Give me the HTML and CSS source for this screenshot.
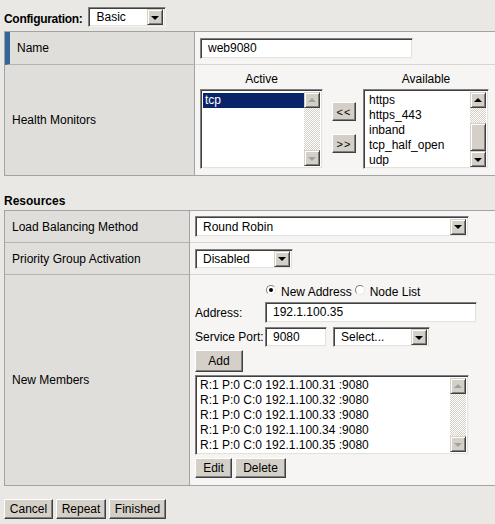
FILE: index.html
```html
<!DOCTYPE html>
<html>
<head>
<meta charset="utf-8">
<link rel="stylesheet" href="styles.css">
</head>
<body>
<div class="page">
  <div class="config">
    <span class="config-label">Configuration:</span>
    <div class="select sel-basic"><span class="sel-text">Basic</span><span class="sel-btn"><i class="tri-down"></i></span></div>
  </div>

  <div class="grid grid-a">
    <div class="lbl lbl-mark row-name">Name</div>
    <div class="val row-name"><div class="field in-name">web9080</div></div>
    <div class="lbl lbl-last row-hm">Health Monitors</div>
    <div class="val val-last row-hm hm">
      <div class="hm-col col-active">
        <div class="hm-head">Active</div>
        <div class="listbox lb-active">
          <div class="lb-items">
            <div class="lb-item selected">tcp</div>
          </div>
          <div class="sbar">
            <span class="sb-btn"><i class="tri-up dis"></i></span>
            <span class="sb-track"></span>
            <span class="sb-btn"><i class="tri-down dis"></i></span>
          </div>
        </div>
      </div>
      <div class="hm-btns">
        <button class="btn btn-move">&lt;&lt;</button>
        <button class="btn btn-move">&gt;&gt;</button>
      </div>
      <div class="hm-col col-avail">
        <div class="hm-head">Available</div>
        <div class="listbox lb-avail">
          <div class="lb-items scrolled">
            <div class="lb-item">http</div>
            <div class="lb-item">https</div>
            <div class="lb-item">https_443</div>
            <div class="lb-item">inband</div>
            <div class="lb-item">tcp_half_open</div>
            <div class="lb-item">udp</div>
          </div>
          <div class="sbar">
            <span class="sb-btn"><i class="tri-up"></i></span>
            <span class="sb-track sb-top"></span>
            <span class="sb-thumb"></span>
            <span class="sb-track"></span>
            <span class="sb-btn"><i class="tri-down"></i></span>
          </div>
        </div>
      </div>
    </div>
  </div>

  <div class="section">Resources</div>

  <div class="grid grid-b">
    <div class="lbl row-std">Load Balancing Method</div>
    <div class="val row-std"><div class="select sel-lb"><span class="sel-text">Round Robin</span><span class="sel-btn"><i class="tri-down"></i></span></div></div>
    <div class="lbl row-std">Priority Group Activation</div>
    <div class="val row-std"><div class="select sel-prio"><span class="sel-text">Disabled</span><span class="sel-btn"><i class="tri-down"></i></span></div></div>
    <div class="lbl lbl-last row-mem">New Members</div>
    <div class="val val-last row-mem members">
      <div class="radios">
        <span class="radio checked"></span><span class="radio-text">New Address</span>
        <span class="radio"></span><span class="radio-text">Node List</span>
      </div>
      <div class="frow frow-addr">
        <span class="flabel">Address:</span>
        <div class="field in-addr">192.1.100.35</div>
      </div>
      <div class="frow frow-port">
        <span class="flabel">Service Port:</span>
        <div class="field in-port">9080</div>
        <div class="select sel-port"><span class="sel-text">Select...</span><span class="sel-btn"><i class="tri-down"></i></span></div>
      </div>
      <button class="btn btn-add">Add</button>
      <div class="listbox lb-members">
        <div class="lb-items">
          <div class="lb-item">R:1 P:0 C:0 192.1.100.31 :9080</div>
          <div class="lb-item">R:1 P:0 C:0 192.1.100.32 :9080</div>
          <div class="lb-item">R:1 P:0 C:0 192.1.100.33 :9080</div>
          <div class="lb-item">R:1 P:0 C:0 192.1.100.34 :9080</div>
          <div class="lb-item">R:1 P:0 C:0 192.1.100.35 :9080</div>
        </div>
        <div class="sbar">
          <span class="sb-btn"><i class="tri-up dis"></i></span>
          <span class="sb-track"></span>
          <span class="sb-btn"><i class="tri-down dis"></i></span>
        </div>
      </div>
      <div class="mem-btns">
        <button class="btn btn-edit">Edit</button>
        <button class="btn btn-delete">Delete</button>
      </div>
    </div>
  </div>

  <div class="actions">
    <button class="btn btn-cancel">Cancel</button>
    <button class="btn btn-repeat">Repeat</button>
    <button class="btn btn-finished">Finished</button>
  </div>
</div>
</body>
</html>
```

FILE: styles.css
```css
html, body {
  margin: 0;
  padding: 0;
  overflow: hidden;
  background: #eae8e4;
}
body {
  font-family: "Liberation Sans", Arial, sans-serif;
  font-size: 12px;
  color: #000;
}
.page {
  padding-left: 4px;
  width: 495px;
}

/* ---------- top config row ---------- */
.config {
  display: flex;
  align-items: center;
  height: 20px;
  padding-top: 7px;
  padding-bottom: 4px;
}
.config-label {
  font-weight: bold;
  letter-spacing: -0.3px;
  margin-right: 6px;
  line-height: 14px;
  margin-top: 3px;
}

/* ---------- sunken fields ---------- */
.field, .select, .listbox {
  box-sizing: border-box;
  background: #fff;
  border: 1px solid;
  border-color: #808080 #f4f3f0 #f4f3f0 #808080;
  box-shadow: inset 1px 1px #404040, inset -1px -1px #e4e2dc;
}
.field {
  height: 21px;
  line-height: 19px;
  padding-left: 7px;
  white-space: nowrap;
  overflow: hidden;
}
.select {
  display: flex;
  align-items: center;
  height: 20px;
  padding: 2px 2px 2px 7px;
}
.sel-text {
  flex: 1;
  white-space: nowrap;
  overflow: hidden;
  line-height: 16px;
}
.sel-btn {
  box-sizing: border-box;
  width: 16px;
  height: 16px;
  flex: none;
  background: #d4d0c8;
  border: 1px solid;
  border-color: #d4d0c8 #404040 #404040 #d4d0c8;
  box-shadow: inset 1px 1px #fff, inset -1px -1px #808080;
  display: flex;
  align-items: center;
  justify-content: center;
}
.sel-basic { width: 78px; }
.sel-lb { width: 274px; height: 21px; }
.sel-prio { width: 98px; }
.sel-port { width: 97px; }

.tri-down, .tri-up {
  display: block;
  width: 0;
  height: 0;
  border-left: 4px solid transparent;
  border-right: 4px solid transparent;
}
.tri-down { border-top: 4px solid #000; margin-top: 1px; }
.tri-up { border-bottom: 4px solid #000; margin-bottom: 1px; }
.tri-down.dis { border-top-color: #a0a0a0; }
.tri-up.dis { border-bottom-color: #a0a0a0; }

/* ---------- buttons ---------- */
.btn {
  box-sizing: border-box;
  font-family: "Liberation Sans", Arial, sans-serif;
  font-size: 12px;
  color: #000;
  background: #d4d0c8;
  border: 1px solid;
  border-color: #fff #404040 #404040 #fff;
  box-shadow: inset -1px -1px #808080;
  height: 20px;
  padding: 0;
  margin: 0;
  line-height: 16px;
  text-align: center;
}

/* ---------- grids ---------- */
.grid {
  display: grid;
  border: 1px solid #a3a3a3;
  border-right: none;
  box-sizing: border-box;
  width: 491px;
}
.grid-a { grid-template-columns: 190px 1fr; }
.grid-b { grid-template-columns: 185px 1fr; }
.lbl {
  background: #dfdedb;
  border-right: 1px solid #a3a3a3;
  border-bottom: 1px solid #b4b4b2;
  display: flex;
  align-items: center;
  padding-left: 7px;
}
.lbl-mark {
  border-left: 5px solid #336699;
  padding-left: 7px;
}
.val {
  background: #f6f5f3;
  border-bottom: 1px solid #d6d5d2;
  display: flex;
  align-items: center;
  padding-left: 5px;
}
.lbl-last, .val-last { border-bottom: none; }

.row-name { height: 33px; box-sizing: border-box; }
.row-hm { height: 110px; }
.row-std { height: 32px; box-sizing: border-box; }
.row-mem { height: 210px; }

.in-name { width: 213px; }

/* ---------- health monitors ---------- */
.hm {
  align-items: flex-start;
  padding-top: 6px;
  box-sizing: border-box;
}
.hm-col {
  display: flex;
  flex-direction: column;
  align-items: center;
}
.hm-head {
  height: 17px;
  line-height: 17px;
  margin-bottom: 1px;
}
.col-active { width: 123px; }
.col-avail { width: 126px; }
.hm-btns {
  display: flex;
  flex-direction: column;
  gap: 13px;
  margin: 31px 7px 0 9px;
}
.btn-move {
  width: 24px;
  height: 19px;
  font-size: 11px;
  letter-spacing: 1px;
}

.listbox {
  display: flex;
  height: 80px;
  padding: 2px;
  overflow: hidden;
}
.lb-active, .lb-avail { width: 100%; }
.lb-items {
  flex: 1;
  overflow: hidden;
}
.lb-item {
  height: 15px;
  line-height: 15px;
  white-space: nowrap;
  padding-left: 2px;
}
.lb-item.selected {
  background: #0a246a;
  color: #fff;
  margin-top: 1px;
}
.scrolled .lb-item:first-child { margin-top: -14px; }
.lb-avail .lb-item { padding-left: 3px; }

.sbar {
  width: 16px;
  flex: none;
  display: flex;
  flex-direction: column;
}
.sb-btn {
  box-sizing: border-box;
  height: 16px;
  flex: none;
  background: #d4d0c8;
  border: 1px solid;
  border-color: #d4d0c8 #404040 #404040 #d4d0c8;
  box-shadow: inset 1px 1px #fff, inset -1px -1px #808080;
  display: flex;
  align-items: center;
  justify-content: center;
}
.sb-track {
  flex: 1;
  background: repeating-conic-gradient(#d4d0c8 0 25%, #fff 0 50%) 0 0 / 2px 2px;
}
.sb-top { flex: none; height: 15px; }
.sb-thumb {
  box-sizing: border-box;
  height: 28px;
  flex: none;
  background: #d4d0c8;
  border: 1px solid;
  border-color: #d4d0c8 #404040 #404040 #d4d0c8;
  box-shadow: inset 1px 1px #fff, inset -1px -1px #808080;
}

/* ---------- section title ---------- */
.section {
  font-weight: bold;
  line-height: 14px;
  padding-top: 18px;
  padding-bottom: 2px;
}

/* ---------- new members ---------- */
.members {
  flex-direction: column;
  align-items: flex-start;
  padding-top: 8px;
  box-sizing: border-box;
}
.radios {
  display: flex;
  align-items: center;
  height: 18px;
  margin-left: 71px;
}
.radio {
  box-sizing: border-box;
  width: 10px;
  height: 10px;
  border-radius: 50%;
  background: #fff;
  border: 1px solid;
  border-color: #808080 #e8e6e0 #e8e6e0 #808080;
  display: flex;
  align-items: center;
  justify-content: center;
  margin-right: 5px;
  margin-top: -4px;
}
.radio.checked::after {
  content: "";
  width: 4px;
  height: 4px;
  border-radius: 50%;
  background: #000;
}
.radio-text { margin-right: 3px; }
.frow {
  display: flex;
  align-items: center;
}
.flabel { width: 70px; }
.frow-addr { margin-top: 1px; }
.in-addr { width: 212px; }
.frow-port { margin-top: 4px; }
.in-port { width: 62px; height: 20px; line-height: 18px; margin-right: 6px; }
.btn-add { width: 48px; height: 22px; margin-top: 3px; }
.lb-members { width: 274px; margin-top: 3px; }
.mem-btns {
  display: flex;
  gap: 3px;
  margin-top: 3px;
}
.btn-edit { width: 37px; }
.btn-delete { width: 51px; }

/* ---------- bottom actions ---------- */
.actions {
  display: flex;
  gap: 3px;
  margin-top: 13px;
}
.btn-cancel { width: 49px; }
.btn-repeat { width: 50px; }
.btn-finished { width: 57px; }
```
